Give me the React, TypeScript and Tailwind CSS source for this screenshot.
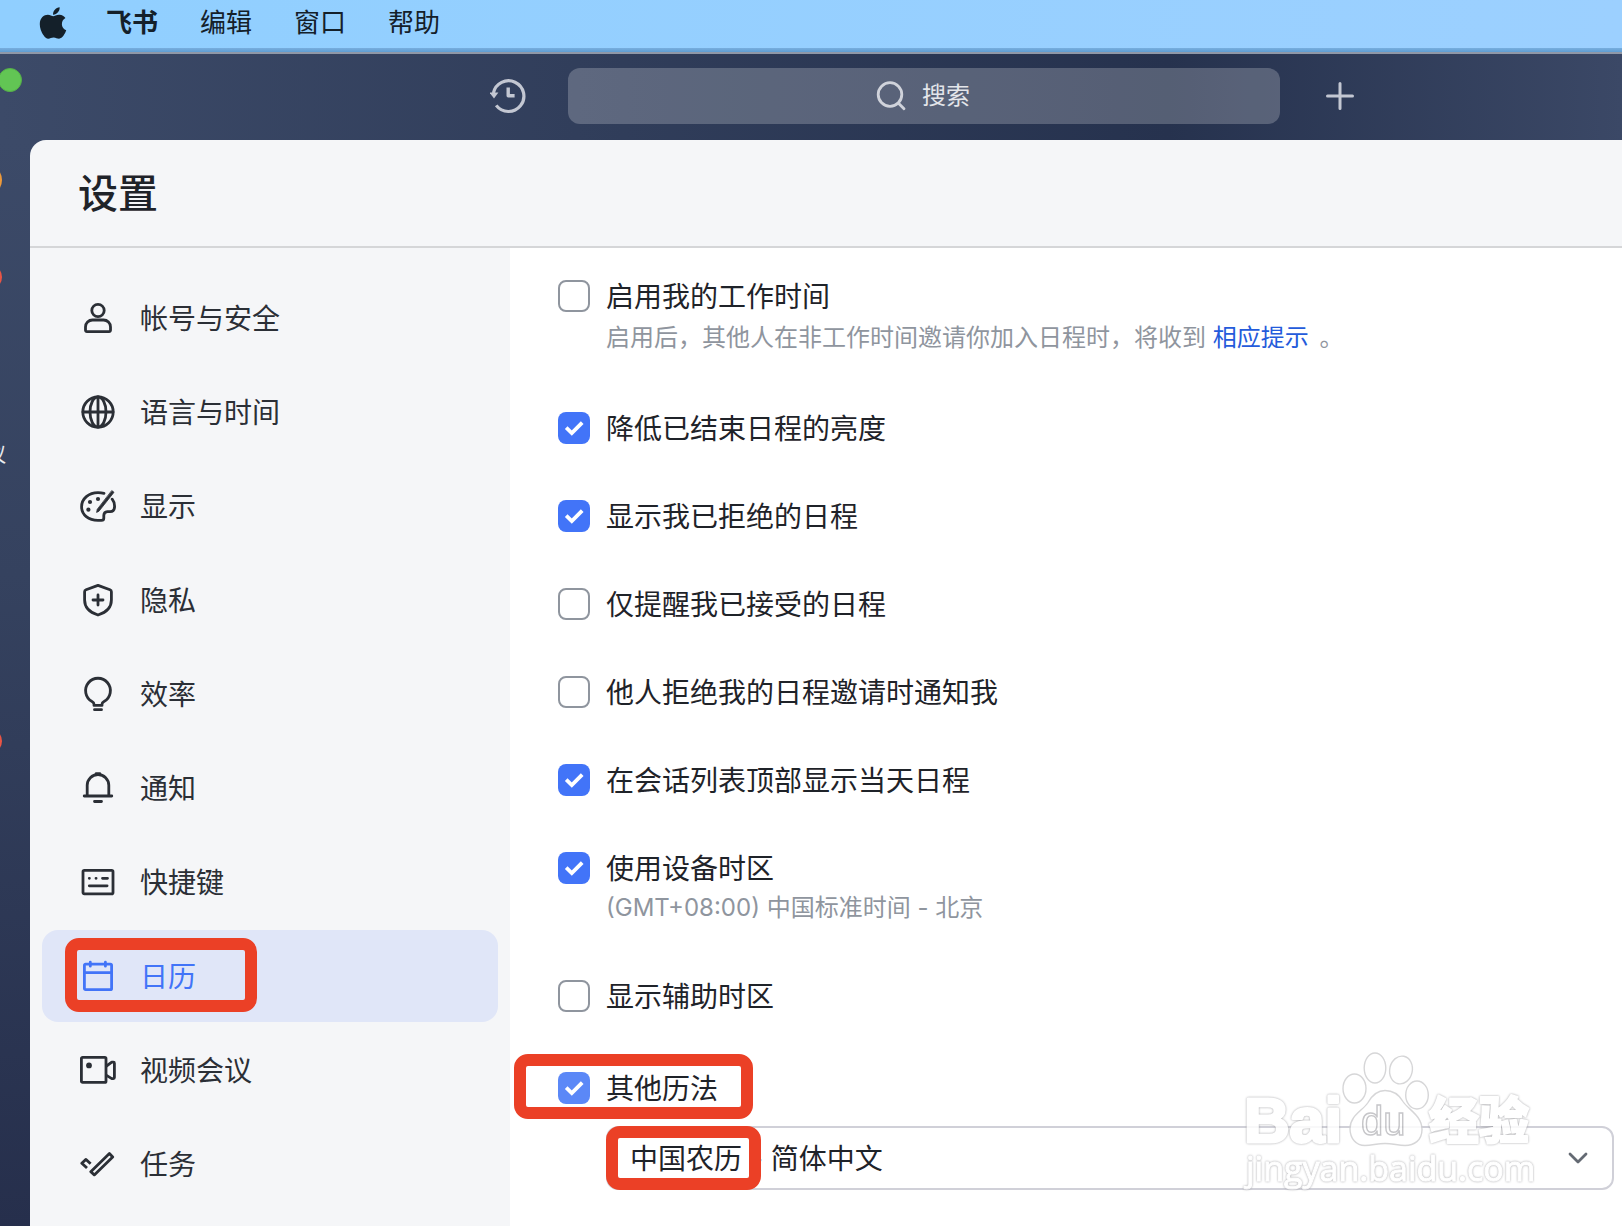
import { useState } from "react";
import type { ReactNode } from "react";
import { FaApple } from "react-icons/fa";

const menus = ["编辑", "窗口", "帮助"];

const stroke = {
  fill: "none",
  stroke: "currentColor",
  strokeWidth: 2.8,
  strokeLinecap: "round" as const,
  strokeLinejoin: "round" as const,
};

const sections: { id: string; label: string; icon: ReactNode }[] = [
  {
    id: "account",
    label: "帐号与安全",
    icon: (
      <>
        <circle cx="18" cy="10.5" r="6.2" />
        <path d="M5.5 30.2V27a7 7 0 0 1 7-7h11a7 7 0 0 1 7 7v3.2a1.4 1.4 0 0 1-1.4 1.4H6.9a1.4 1.4 0 0 1-1.4-1.4z" />
      </>
    ),
  },
  {
    id: "language",
    label: "语言与时间",
    icon: (
      <>
        <circle cx="18" cy="18" r="15.2" />
        <ellipse cx="18" cy="18" rx="8" ry="15.2" />
        <path d="M18 3v30M3 18h30" />
      </>
    ),
  },
  {
    id: "display",
    label: "显示",
    icon: (
      <>
        <path d="M24 5.4C22 4.8 20 4.6 18 4.6 8.8 4.6 1.6 10.6 1.6 18.8c0 8 7 13.6 16.4 13.6h3.4c1.6 0 2.4-.8 2.4-2.2v-2.6c0-2.6 1.2-3.8 3.6-4h2.8c3 0 4.4-2.4 4.4-5.4 0-2.6-.8-5-2.4-7" />
        <path d="M32 2.8l2 1.5L19 23.2l-2.4 1.2.6-2.8z" fill="currentColor" strokeWidth="0.8" />
        <g fill="currentColor" stroke="none">
          <circle cx="10" cy="14" r="2.1" />
          <circle cx="18" cy="11" r="2.1" />
          <circle cx="8.4" cy="21.7" r="2.1" />
        </g>
      </>
    ),
  },
  {
    id: "privacy",
    label: "隐私",
    icon: (
      <>
        <path d="M18 3.4l12 4.4c1 .4 1.4 1 1.4 2V18c0 7-5 12.400-13.400 15C9.600 30.400 4.600 25 4.600 18V9.800c0-1 .4-1.600 1.400-2z" />
        <path d="M18 13v10M13 18h10" />
      </>
    ),
  },
  {
    id: "efficiency",
    label: "效率",
    icon: (
      <>
        <path d="M14 29.4h8v-1.2c0-1.4.6-2 2-2.7a12.4 12.4 0 1 0-12 0c1.4.7 2 1.3 2 2.7z" />
        <path d="M14.5 33.7h7" />
      </>
    ),
  },
  {
    id: "notice",
    label: "通知",
    icon: (
      <>
        <path d="M7.2 26V15.300a10.800 10.800 0 0 1 21.600 0V26M4.200 26h27.600M14.500 31.500h7" />
        <path d="M16.2 3.6h3.6" />
      </>
    ),
  },
  {
    id: "shortcut",
    label: "快捷键",
    icon: (
      <>
        <rect x="3" y="6.4" width="30" height="23.4" rx="1.4" />
        <path d="M9.3 14.300h.1M16 14.300h.1M22.500 14.300h5M9.300 21.800h17.800" />
      </>
    ),
  },
  {
    id: "calendar",
    label: "日历",
    icon: (
      <>
        <rect x="4.4" y="6.2" width="27.2" height="25.4" rx="1.2" />
        <path d="M4.4 14.600h27.200M10.300 4.200v4M25.400 4.200v4" />
      </>
    ),
  },
  {
    id: "video",
    label: "视频会议",
    icon: (
      <>
        <rect x="1.4" y="5.4" width="24.6" height="25" rx="1.2" />
        <path d="M26.5 14l5.300-3.800h1.600c.6 0 1 .4 1 1v14.400c0 .6-.4 1-1 1h-1.600l-5.300-3.200" />
        <circle cx="9" cy="13.4" r="2.9" fill="currentColor" stroke="none" />
      </>
    ),
  },
  {
    id: "task",
    label: "任务",
    icon: (
      <path
        d="M29.4 7.500l3.300 3.400-18.400 18-3.500-3.200zM10.600 17.800L6 13.400 1.800 17.200 7 22"
        strokeLinecap="butt"
      />
    ),
  },
];

type Option = { id: string; label: string; hint?: ReactNode };

const options: Option[] = [
  {
    id: "work",
    label: "启用我的工作时间",
    hint: (
      <p className="h-11 pt-1.5 text-2xl leading-10">
        启用后，其他人在非工作时间邀请你加入日程时，将收到{" "}
        <a href="#hint" className="mr-1 text-[#245bdb]">
          相应提示
        </a>{" "}
        。
      </p>
    ),
  },
  { id: "dim", label: "降低已结束日程的亮度" },
  { id: "declined", label: "显示我已拒绝的日程" },
  { id: "accepted", label: "仅提醒我已接受的日程" },
  { id: "notify", label: "他人拒绝我的日程邀请时通知我" },
  { id: "today", label: "在会话列表顶部显示当天日程" },
  {
    id: "timezone",
    label: "使用设备时区",
    hint: <p className="h-10 pt-1.5 text-2xl leading-9">(GMT+08:00) 中国标准时间 - 北京</p>,
  },
  { id: "second", label: "显示辅助时区" },
];

function Highlight({ className }: { className: string }) {
  return (
    <span
      className={`pointer-events-none absolute rounded-[14px] border-12 border-[#eb4026] ${className}`}
    />
  );
}

function Checkbox({
  id,
  label,
  checked,
  onChange,
  tone = "checked:bg-[#4274f8]",
}: {
  id: string;
  label: string;
  checked: boolean;
  onChange: () => void;
  tone?: string;
}) {
  return (
    <div className="relative flex h-8 items-center gap-4">
      <input
        id={id}
        type="checkbox"
        checked={checked}
        onChange={onChange}
        className={`size-8 shrink-0 appearance-none rounded-lg border-2 border-[#8f959e] bg-white checked:border-0 ${tone}`}
      />
      {checked && (
        <svg viewBox="0 0 32 32" className="pointer-events-none absolute left-0 size-8 text-white">
          <path d="M8.2 15.600l5.600 5.400L24.200 10.600" fill="none" stroke="currentColor" strokeWidth="3.8" />
        </svg>
      )}
      <label htmlFor={id} className="pt-0.5 text-[28px] leading-8">
        {label}
      </label>
    </div>
  );
}

function MenuBar() {
  return (
    <header className="flex h-[54px] shrink-0 flex-col bg-linear-to-r from-[#90cfff] to-[#9cd0ff] text-[#14202a]">
      <nav className="flex h-12 items-center gap-[42px] pb-0.5 pl-[35px] text-[26px] leading-8">
        <FaApple className="-mr-[7px] size-9" />
        <button className="font-bold">飞书</button>
        {menus.map((m) => (
          <button key={m}>{m}</button>
        ))}
      </nav>
      <div className="h-1 bg-linear-to-b from-[#78aede] to-[#5f9dd2]" />
      <div className="h-0.5 bg-[#8f98a8]" />
    </header>
  );
}

function TopBar() {
  return (
    <div className="relative flex h-[86px] shrink-0 items-center gap-[42px] bg-linear-to-r from-[#3c4a68] via-[#26324e] via-72% to-[#3b4866] pr-[264px] pb-0.5 pl-[490px] text-[#c3c7d2]">
      <span className="absolute top-3.5 -left-0.5 size-6 rounded-full border border-[#55b048] bg-[#62c554]" />
      <button aria-label="历史记录">
        <svg viewBox="0 0 36 36" className="size-9" {...stroke} strokeLinecap="butt">
          <path d="M3.4 15A15.400 15.400 0 1 1 6.200 27.400" strokeWidth="3.2" />
          <path d="M-.4 14.600h8.800L4 20.600z" fill="currentColor" stroke="none" />
          <path d="M18.200 9.400v8.400h6.400" strokeWidth="3.4" />
        </svg>
      </button>
      <button className="flex h-14 min-w-0 flex-1 items-center justify-center gap-4 rounded-xl bg-white/22 pr-0.5 text-2xl text-[#e3e5ea]">
        <svg viewBox="0 0 30 30" className="size-[30px] text-[#d0d3db]" {...stroke}>
          <circle cx="14" cy="13.5" r="11.8" />
          <path d="M22.5 22.200l5.500 5.600" />
        </svg>
        搜索
      </button>
      <button aria-label="新建">
        <svg viewBox="0 0 36 36" className="size-9" {...stroke} strokeWidth="3">
          <path d="M18 5.500v25M5.500 18h25" />
        </svg>
      </button>
    </div>
  );
}

// left app rail, only its right edge stays visible
function Rail() {
  return (
    <div className="relative w-[30px] shrink-0 overflow-hidden bg-linear-to-b from-[#3c4a68] via-[#35425f] via-40% to-[#262f4c]">
      <span className="absolute top-6 -left-[30px] size-8 rounded-full bg-[#ee9a3a]" />
      <span className="absolute top-[125px] -left-[22px] size-6 rounded-full bg-[#ea5545]" />
      <span className="absolute top-[299px] -left-[14px] text-xl leading-8 text-white/90">议</span>
      <span className="absolute top-[589px] -left-[22px] size-6 rounded-full bg-[#ea5545]" />
    </div>
  );
}

function Watermark() {
  return (
    <svg
      viewBox="0 0 350 160"
      className="pointer-events-none absolute right-[42px] bottom-8 h-[160px] w-[350px] opacity-85"
    >
      <g fill="#ffffff" stroke="#cfcfd1" strokeWidth="1.4">
        <ellipse cx="124.500" cy="54.500" rx="11.500" ry="14.500" />
        <ellipse cx="145" cy="34" rx="10.800" ry="15" />
        <ellipse cx="171" cy="36" rx="11.300" ry="14" transform="rotate(12 171 36)" />
        <ellipse cx="187" cy="61" rx="11.300" ry="14" />
        <path d="M155 56.500c9 0 14 4 18 11 5 8 19 14 19 28 0 11-8 16-17 16-7 0-12-2-20-2s-13 2-20 2c-9 0-15-7-15-17 0-13 13-18 18-26 4-7 9-12 17-12z" />
        <text x="131" y="101" fontSize="40" stroke="#bdbdc0" className="font-['Liberation_Sans']">
          du
        </text>
      </g>
      <g
        fill="#ffffff"
        stroke="#ffffff"
        strokeLinejoin="round"
        className="drop-shadow-[0_0_1px_#98989c]"
      >
        <text x="14" y="108" fontSize="63" strokeWidth="3" className="font-['Liberation_Sans'] font-bold">
          Bai
        </text>
        <text x="199" y="105" fontSize="50" strokeWidth="2" className="font-['Noto_Sans_CJK_SC'] font-black">
          经验
        </text>
        <text x="16" y="147" fontSize="34" strokeWidth="1" className="font-['Open_Sans']">
          jingyan.baidu.com
        </text>
      </g>
    </svg>
  );
}

export default function App() {
  const [active, setActive] = useState("calendar");
  const [enabled, setEnabled] = useState(["dim", "declined", "today", "timezone", "other"]);

  const toggle = (id: string) =>
    setEnabled((prev) => (prev.includes(id) ? prev.filter((x) => x !== id) : [...prev, id]));

  return (
    <div className="flex min-h-screen flex-col overflow-hidden bg-[#3c4a68] font-['Inter','Noto_Sans_CJK_SC',sans-serif] text-[#1f2329]">
      <MenuBar />
      <TopBar />
      <div className="flex flex-1">
        <Rail />
        <div className="flex min-w-0 flex-1 flex-col bg-[#3a4866]">
          <div className="flex flex-1 flex-col overflow-hidden rounded-tl-2xl bg-[#f5f6f8]">
            <div className="flex h-27 shrink-0 items-center border-b-2 border-[#d5d6d8] pt-0.5 pl-12">
              <h1 className="text-[40px] leading-12 font-medium">设置</h1>
            </div>
            <div className="flex flex-1">
              <nav className="flex w-[480px] shrink-0 flex-col gap-0.5 px-3 pt-6">
                {sections.map((s) => (
                  <button
                    key={s.id}
                    onClick={() => setActive(s.id)}
                    className={`relative flex h-23 items-center gap-6 rounded-2xl pl-[38px] text-[28px] ${
                      active === s.id ? "bg-[#e0e6f8] text-[#4274f8]" : "text-[#2b2f36]"
                    }`}
                  >
                    <svg viewBox="0 0 36 36" className="size-9" {...stroke}>
                      {s.icon}
                    </svg>
                    <span className="pt-0.5">{s.label}</span>
                    {s.id === "calendar" && <Highlight className="top-2 left-[23px] h-[74px] w-48" />}
                  </button>
                ))}
              </nav>
              <main className="relative min-w-0 flex-1 bg-white pt-8 pr-2 pb-9 pl-12">
                <div className="mb-15 flex flex-col gap-14">
                  {options.map((o) => (
                    <div key={o.id}>
                      <Checkbox
                        id={o.id}
                        label={o.label}
                        checked={enabled.includes(o.id)}
                        onChange={() => toggle(o.id)}
                      />
                      {o.hint && <div className="pl-12 text-[#8f959e]">{o.hint}</div>}
                    </div>
                  ))}
                </div>
                <div className="relative">
                  <Checkbox
                    id="other"
                    label="其他历法"
                    checked={enabled.includes("other")}
                    onChange={() => toggle("other")}
                    tone="checked:bg-[#5b88f7]"
                  />
                  <Highlight className="-top-[18px] -left-11 h-[65px] w-[239px]" />
                </div>
                <div className="relative mt-[22px] ml-12">
                  <select
                    aria-label="其他历法"
                    className="h-16 w-full appearance-none rounded-xl border-2 border-[#d0d0d8] bg-white px-[22px] pt-0.5 text-[28px]"
                  >
                    <option>中国农历 - 简体中文</option>
                  </select>
                  <svg
                    viewBox="0 0 24 24"
                    className="pointer-events-none absolute top-5 right-6 size-6 text-[#646a73]"
                    {...stroke}
                  >
                    <path d="M4 8l8 8 8-8" />
                  </svg>
                  <Highlight className="top-0 left-0 h-16 w-[155px]" />
                </div>
                <Watermark />
              </main>
            </div>
          </div>
        </div>
      </div>
    </div>
  );
}
